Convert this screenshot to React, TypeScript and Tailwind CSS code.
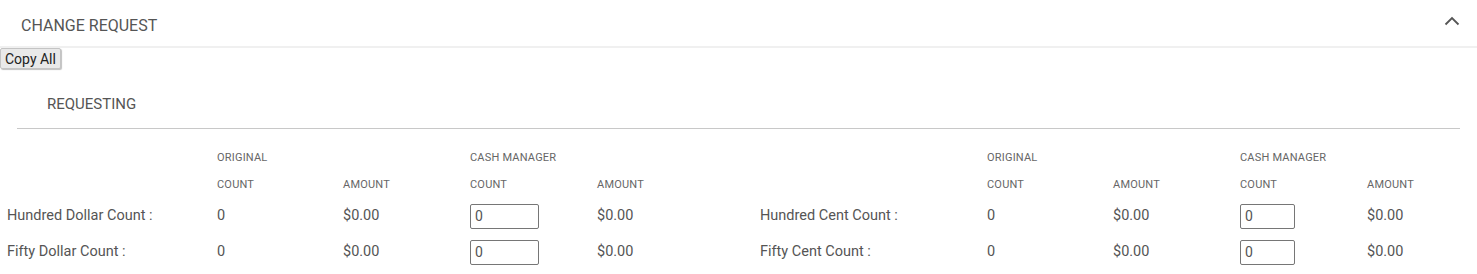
const rows = [
  { left: "Hundred Dollar Count :", right: "Hundred Cent Count :" },
  { left: "Fifty Dollar Count :", right: "Fifty Cent Count :" },
];

const cols =
  "grid grid-cols-[210px_126px_127px_127px_163px_227px_126px_127px_127px_1fr]";

function Head({ children }: { children?: React.ReactNode }) {
  return <div className="text-[11px] uppercase leading-[14px] tracking-[0.2px] text-[#666]">{children}</div>;
}

export default function App() {
  return (
    <div className="w-[1477px] bg-white font-['Roboto',sans-serif] text-[#555]">
      <div className="flex h-[48px] items-center justify-between border-b-2 border-[#f0f0f0] pl-[21px] pr-[17px]">
        <span className="pt-[5px] text-[16px] uppercase">Change Request</span>
        <svg width="16" height="10" viewBox="0 0 16 10" className="mb-[5px]">
          <path d="M1.5 8.5 L8 2 L14.5 8.5" fill="none" stroke="#555" strokeWidth="1.8" />
        </svg>
      </div>
      <button className="block h-[21px] rounded-[2px] border border-[#c4c4c4] bg-[#e9e9e9] px-[4px] text-[14px] leading-none text-[#222] shadow-[1px_1px_1px_rgba(0,0,0,0.25)]">
        Copy All
      </button>
      <div className="mx-[17px]">
        <div className="h-[60px] border-b border-[#c8c8c8] pl-[30px] pt-[26px] text-[15px] uppercase leading-[18px]">
          Requesting
        </div>
      </div>
      <div className={`${cols} pl-[7px] pt-[22px]`}>
        <div />
        <Head>Original</Head>
        <div />
        <Head>Cash Manager</Head>
        <div />
        <div />
        <Head>Original</Head>
        <div />
        <Head>Cash Manager</Head>
        <div />
      </div>
      <div className={`${cols} pl-[7px] pt-[13px]`}>
        <div />
        <Head>Count</Head>
        <Head>Amount</Head>
        <Head>Count</Head>
        <Head>Amount</Head>
        <div />
        <Head>Count</Head>
        <Head>Amount</Head>
        <Head>Count</Head>
        <Head>Amount</Head>
      </div>
      <div className="pt-[6px]">
        {rows.map((r) => (
          <div key={r.left} className={`${cols} h-[36px] items-center pl-[7px] text-[14.5px]`}>
            <div>{r.left}</div>
            <div>0</div>
            <div>$0.00</div>
            <div>
              <input
                defaultValue="0"
                className="h-[25px] w-[69px] rounded-[2px] border border-[#767676] px-[4px] text-[14px] text-[#555] outline-none"
              />
            </div>
            <div>$0.00</div>
            <div>{r.right}</div>
            <div>0</div>
            <div>$0.00</div>
            <div>
              <input
                defaultValue="0"
                className="h-[25px] w-[55px] rounded-[2px] border border-[#767676] px-[4px] text-[14px] text-[#555] outline-none"
              />
            </div>
            <div>$0.00</div>
          </div>
        ))}
      </div>
    </div>
  );
}
